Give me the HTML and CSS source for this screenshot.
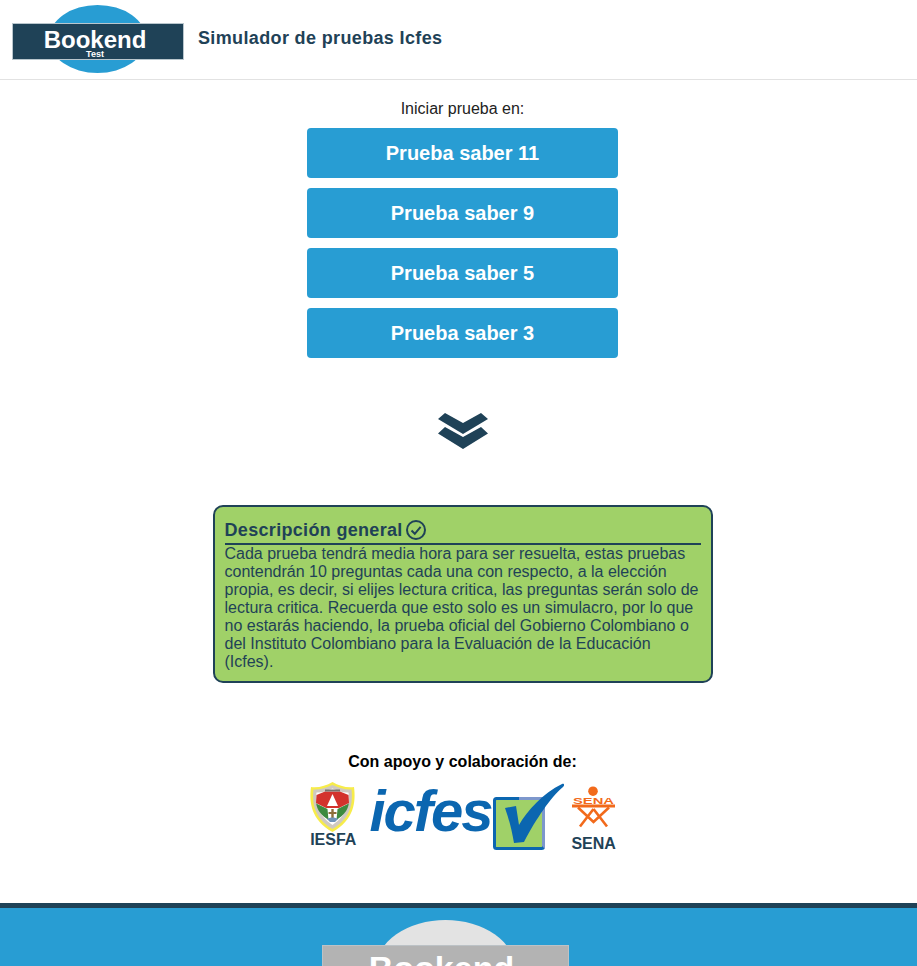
FILE: index.html
```html
<!DOCTYPE html>
<html lang="es">
<head>
  <meta charset="UTF-8" />
  <meta name="viewport" content="width=device-width, initial-scale=1" />
  <title>Bookend Test</title>
  <link rel="stylesheet" href="styles.css">
</head>
<body>

  <header class="top-bar">
    <div class="logo">
      <div class="logo-band">
        <span class="logo-name">Bookend</span>
        <span class="logo-sub">Test</span>
      </div>
    </div>
    <h1 class="top-title">Simulador de pruebas Icfes</h1>
  </header>

  <main class="content">
    <p class="start-label">Iniciar prueba en:</p>
    <div class="test-list">
      <a class="test-button">Prueba saber 11</a>
      <a class="test-button">Prueba saber 9</a>
      <a class="test-button">Prueba saber 5</a>
      <a class="test-button">Prueba saber 3</a>
    </div>

    <svg class="chevrons" width="50" height="36" viewBox="0 0 50 36" aria-hidden="true">
      <path d="M7 0 L25 10 L43 0 L50 6 L25 21 L0 6 Z" />
      <path d="M7 14 L25 24 L43 14 L50 20.500 L25 36 L0 20.500 Z" />
    </svg>

    <section class="description">
      <h2 class="description-title">
        Descripción general
        <svg width="20" height="20" viewBox="0 0 20 20" aria-hidden="true">
          <circle cx="10" cy="10" r="9" fill="none" stroke="#1f4257" stroke-width="2" />
          <path d="M5.500 10.500 L8.800 13.800 L14.600 6.800" fill="none" stroke="#1f4257" stroke-width="2" />
        </svg>
      </h2>
      <p class="description-text">Cada prueba tendrá media hora para ser resuelta, estas pruebas contendrán 10 preguntas cada una con respecto, a la elección propia, es decir, si elijes lectura critica, las preguntas serán solo de lectura critica. Recuerda que esto solo es un simulacro, por lo que no estarás haciendo, la prueba oficial del Gobierno Colombiano o del Instituto Colombiano para la Evaluación de la Educación (Icfes).</p>
    </section>

    <section class="support">
      <p class="support-title">Con apoyo y colaboración de:</p>
      <div class="support-logos">
        <div class="partner partner-iesfa">
          <svg width="47" height="50" viewBox="0 0 47 50" aria-hidden="true">
            <path d="M23.500 0 C30 4 38 6 45 5 C47 20 45 38 23.500 50 C2 38 0 20 2 5 C9 6 17 4 23.500 0 Z" fill="#f7ec4a" />
            <path d="M23.500 3 C30 6 37 8 42.500 7.500 C44 21 42 36 23.500 47 C5 36 3 21 4.500 7.500 C10 8 17 6 23.500 3 Z" fill="#cfc9c0" />
            <path d="M23.500 6.500 C29 9 35 11 39.500 10.500 C40.500 21 38 33 23.500 43 C9 33 6.500 21 7.500 10.500 C12 11 18 9 23.500 6.500 Z" fill="#fff" />
            <path d="M7.500 13 L16 9.500 L31 9.500 L39.500 13 L40 21 L30 26 L17 26 L7 21 Z" fill="#d3322c" />
            <path d="M7.200 21.500 L18.500 27 L19.500 38 C12 33 8 28 7.200 21.500 Z M39.800 21.500 L28.500 27 L27.500 38 C35 33 39 28 39.800 21.500 Z" fill="#3d8a3f" />
            <path d="M18 24 L23.500 12 L29 24 Z" fill="#fff" />
            <path d="M22.300 27 L24.700 27 L24.700 30 L27.500 30 L27.500 32 L24.700 32 L24.700 37 L22.300 37 L22.300 32 L19.500 32 L19.500 30 L22.300 30 Z" fill="#8d6d3a" />
            <path d="M18 37 C21 35 26 35 29 37 L26 40 L21 40 Z" fill="#6f93b8" />
            <path d="M16 7.500 L31 7.500 L31 9.500 L16 9.500 Z" fill="#77706a" />
          </svg>
          <span class="partner-name">IESFA</span>
        </div>
        <div class="partner-icfes">
          <span class="icfes-word">icfes</span>
          <svg width="75" height="68" viewBox="0 0 75 68" aria-hidden="true">
            <rect x="3.500" y="15.500" width="49" height="50" rx="2" fill="#a0d168" stroke="#0b66b0" stroke-width="3" />
            <path d="M28 14 L52 14 C53.500 14 54 15 54 16 L54 66 L51 63 L51 17 L28 17 Z" fill="#7d97cc" />
            <path d="M14 25 L25 23 L28 42 C36 28 52 10 71 1 C73 0 74 2 72 4 C60 14 45 36 33 59 L23 60 C21 48 18 36 14 25 Z" fill="#0b66b0" />
          </svg>
        </div>
        <div class="partner partner-sena">
          <svg width="43" height="42" viewBox="0 0 43 42" aria-hidden="true">
            <circle cx="21" cy="5.200" r="4.800" fill="#f26a1b" />
            <text x="1" y="17.500" textLength="41" lengthAdjust="spacingAndGlyphs" class="sena-mark">SENA</text>
            <rect x="0" y="18.500" width="43" height="3" fill="#f26a1b" />
            <path d="M6 21.500 L21.500 36 L37 21.500 M21.500 23 L8 40.500 M21.500 23 L35 40.500" fill="none" stroke="#f26a1b" stroke-width="2.600" />
          </svg>
          <span class="partner-name">SENA</span>
        </div>
      </div>
    </section>
  </main>

  <footer class="bottom-bar">
    <div class="logo logo-big">
      <div class="logo-band">
        <span class="logo-name">Bookend</span>
        <span class="logo-sub">Test</span>
      </div>
    </div>
  </footer>

</body>
</html>
```

FILE: styles.css
```css
html, body {
  margin: 0;
  padding: 0;
  height: 100vh;
  overflow: hidden;
  background: #fff;
  font-family: "Liberation Sans", Arial, sans-serif;
  color: #1f4257;
}

/* 1. Header */
.top-bar {
  height: 79px;
  display: flex;
  align-items: center;
  gap: 14px;
  padding-left: 12px;
  border-bottom: 1px solid #e2e2e2;
}
.top-title {
  margin: 0 0 2px;
  font-size: 18px;
  font-weight: bold;
  letter-spacing: 0.36px;
}

/* Logo: ellipse behind a band */
.logo {
  position: relative;
  width: 172px;
  height: 68px;
  margin-top: -1px;
  display: flex;
  align-items: center;
  justify-content: center;
}
.logo::before {
  content: "";
  position: absolute;
  top: 0;
  left: 37px;
  width: 97px;
  height: 68px;
  border-radius: 50%;
  background: #289dd3;
}
.logo-band {
  position: relative;
  width: 100%;
  height: 37px;
  margin-top: 5px;
  padding-right: 6px;
  box-sizing: border-box;
  border: 1px solid #b9c6cd;
  background: #1f4257;
  color: #fff;
  text-align: center;
  font-weight: bold;
}
.logo-name {
  display: block;
  margin-top: 3px;
  font-size: 24px;
  line-height: 26px;
}
.logo-sub {
  display: block;
  margin-top: -3px;
  font-size: 9px;
  line-height: 9px;
}
.logo-big {
  width: 247px;
  height: 97px;
  margin-top: 0;
  align-items: flex-start;
}
.logo-big::before {
  left: 54px;
  width: 139px;
  height: 97px;
  background: #e3e3e3;
}
.logo-big .logo-band {
  height: 53px;
  margin-top: 25px;
  padding-right: 8px;
  border-color: #bcc2c6;
  background: #b3b3b3;
}
.logo-big .logo-name {
  margin-top: 3px;
  font-size: 34px;
  line-height: 38px;
}

/* 2. Main column, sits a bit right of window centre */
.content {
  display: flex;
  flex-direction: column;
  align-items: center;
  padding-left: 8px;
}
.start-label {
  margin: 20px 0 10px;
  font-size: 16px;
  line-height: 18px;
  color: #222;
}
.test-list {
  width: 311px;
  display: flex;
  flex-direction: column;
  gap: 10px;
}
.test-button {
  height: 50px;
  display: flex;
  align-items: center;
  justify-content: center;
  border-radius: 4px;
  background: #289dd3;
  color: #fff;
  font-size: 20px;
  font-weight: bold;
  cursor: pointer;
}
.chevrons {
  display: block;
  margin: 55px 0 56px;
  fill: #1f4257;
}

/* 3. Description card */
.description {
  width: 500px;
  height: 178px;
  box-sizing: border-box;
  padding: 11px 10px 0;
  border: 2px solid #1f4257;
  border-radius: 10px;
  background: #a0d168;
}
.description-title {
  height: 25px;
  margin: 0;
  display: flex;
  align-items: center;
  gap: 3px;
  border-bottom: 2px solid #1f4257;
  font-size: 18px;
  font-weight: bold;
  letter-spacing: 0.32px;
}
.description-title svg {
  margin-top: -1px;
}
.description-text {
  margin: 0;
  font-size: 16px;
  line-height: 18px;
}

/* 4. Support logos */
.support {
  margin-top: 70px;
  display: flex;
  flex-direction: column;
  align-items: center;
}
.support-title {
  margin: 0;
  font-size: 16px;
  font-weight: bold;
  line-height: 18px;
  color: #000;
}
.support-logos {
  margin-top: 10px;
  display: flex;
  align-items: flex-start;
}
.partner {
  display: flex;
  flex-direction: column;
  align-items: center;
}
.partner-iesfa {
  margin-top: 1px;
  margin-right: 13px;
}
.partner-sena {
  margin-top: 5px;
  margin-left: 5px;
  gap: 7px;
}
.partner-name {
  font-size: 16px;
  font-weight: bold;
  line-height: 18px;
}
.partner-iesfa .partner-name {
  margin-top: -1px;
  margin-left: 1px;
}
.partner-icfes {
  display: flex;
  align-items: flex-start;
}
.icfes-word {
  width: 122px;
  margin-top: 5px;
  font-size: 58px;
  font-weight: bold;
  font-style: italic;
  line-height: 50px;
  letter-spacing: -2px;
  color: #0b66b0;
}
.partner-icfes svg {
  margin-top: 2px;
}
.sena-mark {
  font-family: "Liberation Sans", Arial, sans-serif;
  font-size: 9px;
  font-weight: bold;
  fill: #f26a1b;
}

/* 5. Footer */
.bottom-bar {
  margin-top: 50px;
  height: 200px;
  padding: 12px 26px 0 0;
  display: flex;
  justify-content: center;
  border-top: 5px solid #1f4257;
  background: #289dd3;
}
```
